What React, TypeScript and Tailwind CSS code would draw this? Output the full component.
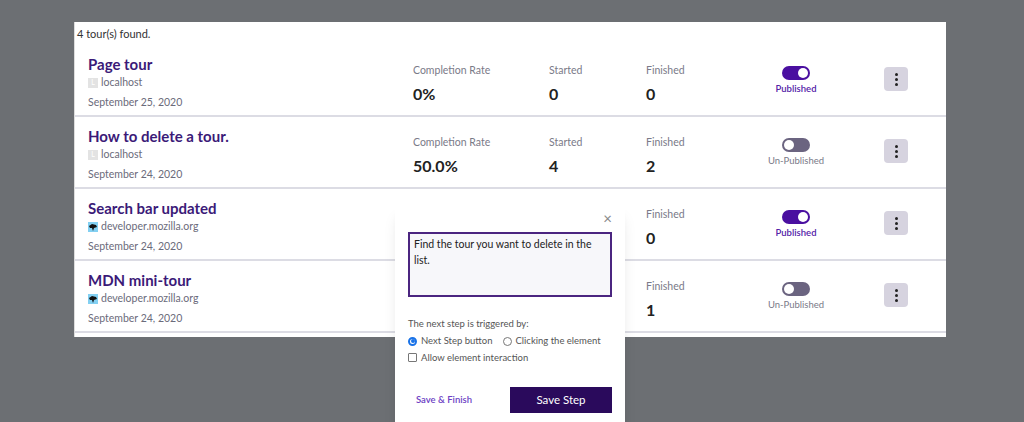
import React from "react";

const tours = [
  { title: "Page tour", host: "localhost", date: "September 25, 2020", rate: "0%", started: "0", finished: "0", pub: true, moz: false },
  { title: "How to delete a tour.", host: "localhost", date: "September 24, 2020", rate: "50.0%", started: "4", finished: "2", pub: false, moz: false },
  { title: "Search bar updated", host: "developer.mozilla.org", date: "September 24, 2020", rate: "", started: "", finished: "0", pub: true, moz: true },
  { title: "MDN mini-tour", host: "developer.mozilla.org", date: "September 24, 2020", rate: "", started: "", finished: "1", pub: false, moz: true },
];

function Fav({ moz }: { moz: boolean }) {
  if (!moz)
    return <span className="w-[10px] h-[10px] bg-[#e3e3e3] text-[7px] text-white flex items-center justify-center leading-none">L</span>;
  return (
    <svg width="10" height="10" viewBox="0 0 10 10">
      <rect width="10" height="10" fill="#83d0f2" />
      <path d="M1 4 L4 2 L8 3 L9 5 L6 6 L5 9 L4 6 L2 6 Z" fill="#111" />
    </svg>
  );
}

export default function App() {
  return (
    <div className="relative w-[1024px] h-[422px] bg-[#6c6f73] overflow-hidden" style={{ fontFamily: "Lato, 'Open Sans', sans-serif" }}>
      <div className="absolute left-[74px] top-[22px] w-[872px] h-[315px] bg-white border-l border-[#ddd]">
        <div className="h-[23px] pl-[2px] pt-[4px] text-[11px] text-[#333]">4 tour(s) found.</div>
        {tours.map((t, i) => (
          <div key={i} className="flex h-[72px] border-b-2 border-[#dcdce4] items-stretch">
            <div className="w-[338px] pl-[13px] pt-[10px]">
              <div className="text-[15px] font-bold text-[#3b1a78] leading-[18px]">{t.title}</div>
              <div className="flex items-center gap-[3px] mt-[2px] text-[10.5px] text-[#6b6b7b]"><Fav moz={t.moz} />{t.host}</div>
              <div className="text-[10.5px] text-[#6b6b7b] mt-[4px]">{t.date}</div>
            </div>
            <div className="w-[136px] pt-[18px]">
              <div className="text-[10.5px] text-[#7a7a88]">{t.rate && "Completion Rate"}</div>
              <div className="text-[16px] font-bold text-[#222] mt-[3px]">{t.rate}</div>
            </div>
            <div className="w-[97px] pt-[18px]">
              <div className="text-[10.5px] text-[#7a7a88]">{t.started && "Started"}</div>
              <div className="text-[16px] font-bold text-[#222] mt-[3px]">{t.started}</div>
            </div>
            <div className="w-[100px] pt-[18px]">
              <div className="text-[10.5px] text-[#7a7a88]">Finished</div>
              <div className="text-[16px] font-bold text-[#222] mt-[3px]">{t.finished}</div>
            </div>
            <div className="w-[100px] flex flex-col items-center pt-[21px]">
              <div className={`w-[28px] h-[14px] rounded-full flex items-center px-[2px] ${t.pub ? "bg-[#4a0fa0] justify-end" : "bg-[#6b6480] justify-start"}`}>
                <div className="w-[10px] h-[10px] rounded-full bg-white" />
              </div>
              <div className={`text-[9.5px] mt-[2px] ${t.pub ? "text-[#5322a8] font-semibold" : "text-[#7a7a88]"}`}>{t.pub ? "Published" : "Un-Published"}</div>
            </div>
            <div className="pl-[38px] pt-[22px]">
              <div className="w-[24px] h-[24px] rounded bg-[#d6d3df] flex flex-col items-center justify-center gap-[2px]">
                <span className="w-[3px] h-[3px] rounded-full bg-[#222]" />
                <span className="w-[3px] h-[3px] rounded-full bg-[#222]" />
                <span className="w-[3px] h-[3px] rounded-full bg-[#222]" />
              </div>
            </div>
          </div>
        ))}
      </div>

      <div className="absolute left-[395px] top-[206px] w-[230px] h-[230px] bg-white rounded-[4px] shadow-lg px-[13px]">
        <div className="flex justify-end pt-[4px] text-[#888] text-[15px] leading-[16px]">×</div>
        <div className="mt-[6px] h-[65px] border-2 border-[#4b2580] bg-[#f7f7fa] px-[4px] pt-[3px] text-[10.5px] text-[#222]">Find the tour you want to delete in the list.</div>
        <div className="mt-[20px] text-[9.5px] text-[#555]">The next step is triggered by:</div>
        <div className="flex items-center gap-[4px] text-[9.5px] text-[#555] mt-[3px]">
          <span className="w-[9px] h-[9px] rounded-full border-2 border-[#1a73e8] bg-white flex items-center justify-center"><span className="w-[4px] h-[4px] rounded-full bg-[#1a73e8]" /></span>
          <span className="mr-[6px]">Next Step button</span>
          <span className="w-[9px] h-[9px] rounded-full border border-[#777]" />
          <span>Clicking the element</span>
        </div>
        <div className="flex items-center gap-[4px] text-[9.5px] text-[#555] mt-[2px]">
          <span className="w-[9px] h-[9px] rounded-[1px] border border-[#777]" />
          <span>Allow element interaction</span>
        </div>
        <div className="flex items-center justify-between mt-[22px]">
          <span className="text-[9.5px] text-[#6d3fc4] font-semibold pl-[8px]">Save &amp; Finish</span>
          <div className="w-[102px] h-[26px] bg-[#2a0a5c] text-white text-[11.5px] flex items-center justify-center">Save Step</div>
        </div>
      </div>
    </div>
  );
}
